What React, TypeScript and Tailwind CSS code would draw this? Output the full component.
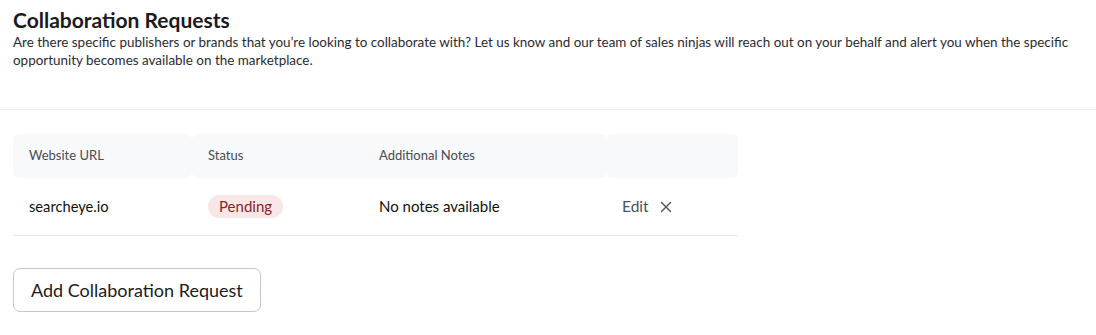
import React from "react";

export default function App() {
  return (
    <div className="w-[1096px] h-[335px] bg-white text-[#1b1b1f]" style={{ fontFamily: "Lato, 'Noto Sans', sans-serif" }}>
      <div className="px-[13px] pt-[7px]">
        <h1 className="text-[21px] leading-[26px] font-bold text-[#1a1a1f]">Collaboration Requests</h1>
        <p className="text-[13.45px] leading-[18px] text-[#2b2b33] mt-[0px] pr-[10px]">
          Are there specific publishers or brands that you’re looking to collaborate with? Let us know and our team of sales ninjas will reach out on your behalf and alert you when the specific opportunity becomes available on the marketplace.
        </p>
      </div>
      <div className="mt-[40px] border-t border-[#ececec]" />
      <div className="px-[13px] pt-[24px]">
        <div className="w-[725px]">
          <div className="flex h-[44px] text-[13px] text-[#4a4a55]">
            <div className="w-[179px] bg-[#f8f9fa] rounded-[6px] flex items-center pl-[16px]">Website URL</div>
            <div className="w-[170px] bg-[#f8f9fa] rounded-l-[6px] flex items-center pl-[16px]">Status</div>
            <div className="w-[244px] bg-[#f8f9fa] rounded-r-[6px] flex items-center pl-[17px]">Additional Notes</div>
            <div className="w-[132px] bg-[#f8f9fa] rounded-[6px]" />
          </div>
          <div className="flex h-[58px] items-center border-b border-[#e8e8ea] text-[14.7px] text-[#111]">
            <div className="w-[179px] pl-[16px]">searcheye.io</div>
            <div className="w-[170px] pl-[16px]">
              <span className="inline-flex items-center h-[23px] px-[11px] rounded-full bg-[#f9e6e7] text-[#8a1f2f] text-[15px]">Pending</span>
            </div>
            <div className="w-[244px] pl-[17px] text-[15px]">No notes available</div>
            <div className="w-[132px] pl-[16px] flex items-center gap-[11px] text-[#4b5060] text-[15.5px]">
              <span>Edit</span>
              <svg width="12" height="12" viewBox="0 0 12 12" fill="none" stroke="#4b5060" strokeWidth="1.4" strokeLinecap="round">
                <path d="M1.5 1.5 L10.5 10.5 M10.5 1.5 L1.5 10.5" />
              </svg>
            </div>
          </div>
        </div>
        <button className="mt-[32px] h-[44px] px-[17px] rounded-[7px] border border-[#c8c8cc] bg-white text-[18px] text-[#1b1b22]">
          Add Collaboration Request
        </button>
      </div>
    </div>
  );
}
